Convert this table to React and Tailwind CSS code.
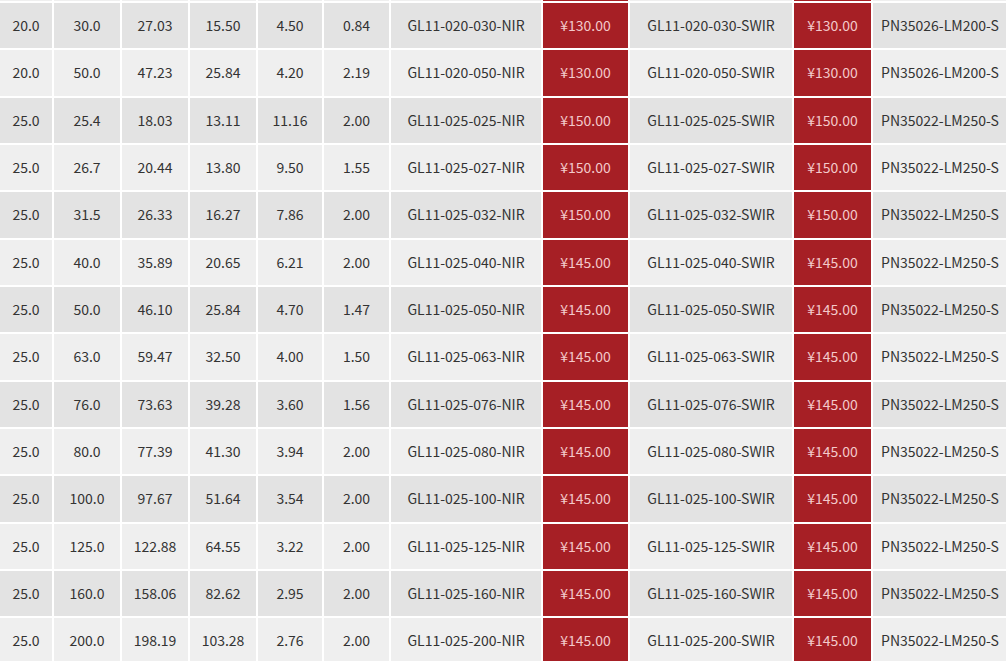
import React from "react";

const rows = [
  ["20.0", "30.0", "27.03", "15.50", "4.50", "0.84", "020-030", "130.00", "PN35026-LM200-S"],
  ["20.0", "50.0", "47.23", "25.84", "4.20", "2.19", "020-050", "130.00", "PN35026-LM200-S"],
  ["25.0", "25.4", "18.03", "13.11", "11.16", "2.00", "025-025", "150.00", "PN35022-LM250-S"],
  ["25.0", "26.7", "20.44", "13.80", "9.50", "1.55", "025-027", "150.00", "PN35022-LM250-S"],
  ["25.0", "31.5", "26.33", "16.27", "7.86", "2.00", "025-032", "150.00", "PN35022-LM250-S"],
  ["25.0", "40.0", "35.89", "20.65", "6.21", "2.00", "025-040", "145.00", "PN35022-LM250-S"],
  ["25.0", "50.0", "46.10", "25.84", "4.70", "1.47", "025-050", "145.00", "PN35022-LM250-S"],
  ["25.0", "63.0", "59.47", "32.50", "4.00", "1.50", "025-063", "145.00", "PN35022-LM250-S"],
  ["25.0", "76.0", "73.63", "39.28", "3.60", "1.56", "025-076", "145.00", "PN35022-LM250-S"],
  ["25.0", "80.0", "77.39", "41.30", "3.94", "2.00", "025-080", "145.00", "PN35022-LM250-S"],
  ["25.0", "100.0", "97.67", "51.64", "3.54", "2.00", "025-100", "145.00", "PN35022-LM250-S"],
  ["25.0", "125.0", "122.88", "64.55", "3.22", "2.00", "025-125", "145.00", "PN35022-LM250-S"],
  ["25.0", "160.0", "158.06", "82.62", "2.95", "2.00", "025-160", "145.00", "PN35022-LM250-S"],
  ["25.0", "200.0", "198.19", "103.28", "2.76", "2.00", "025-200", "145.00", "PN35022-LM250-S"],
];

function Cell({ w, red, children }) {
  return (
    <div
      className={
        "flex shrink-0 items-center justify-center border-r-2 border-white whitespace-nowrap " +
        w +
        (red ? " bg-[#a61f25] text-[#f3c9ca]" : "")
      }
    >
      {children}
    </div>
  );
}

function Row({ r, dark, band }) {
  return (
    <div
      className={
        "flex " +
        (band ? "h-px " : "h-[47.33px] border-t-2 border-white ") +
        (dark ? "bg-[#e3e3e3]" : "bg-[#efefef]")
      }
    >
      <Cell w="w-[54px]">{r[0]}</Cell>
      <Cell w="w-[68px]">{r[1]}</Cell>
      <Cell w="w-[68px]">{r[2]}</Cell>
      <Cell w="w-[68px]">{r[3]}</Cell>
      <Cell w="w-[66px]">{r[4]}</Cell>
      <Cell w="w-[67px]">{r[5]}</Cell>
      <Cell w="w-[152px]">{band ? "" : `GL11-${r[6]}-NIR`}</Cell>
      <Cell w="w-[87px]" red>{band ? "" : `¥${r[7]}`}</Cell>
      <Cell w="w-[164px]">{band ? "" : `GL11-${r[6]}-SWIR`}</Cell>
      <Cell w="w-[79px]" red>{band ? "" : `¥${r[7]}`}</Cell>
      <div className="flex w-[134px] shrink-0 items-center justify-center whitespace-nowrap">
        {r[8]}
      </div>
    </div>
  );
}

export default function App() {
  return (
    <div
      className="h-[661px] w-[1006px] overflow-hidden bg-[#efefef] text-[14px] text-[#333333]"
      style={{ fontFamily: '"Noto Sans CJK SC", "Noto Sans", sans-serif' }}
    >
      <Row r={["", "", "", "", "", "", "", "", ""]} band />
      {rows.map((r, i) => (
        <Row key={i} r={r} dark={i % 2 === 0} />
      ))}
    </div>
  );
}
